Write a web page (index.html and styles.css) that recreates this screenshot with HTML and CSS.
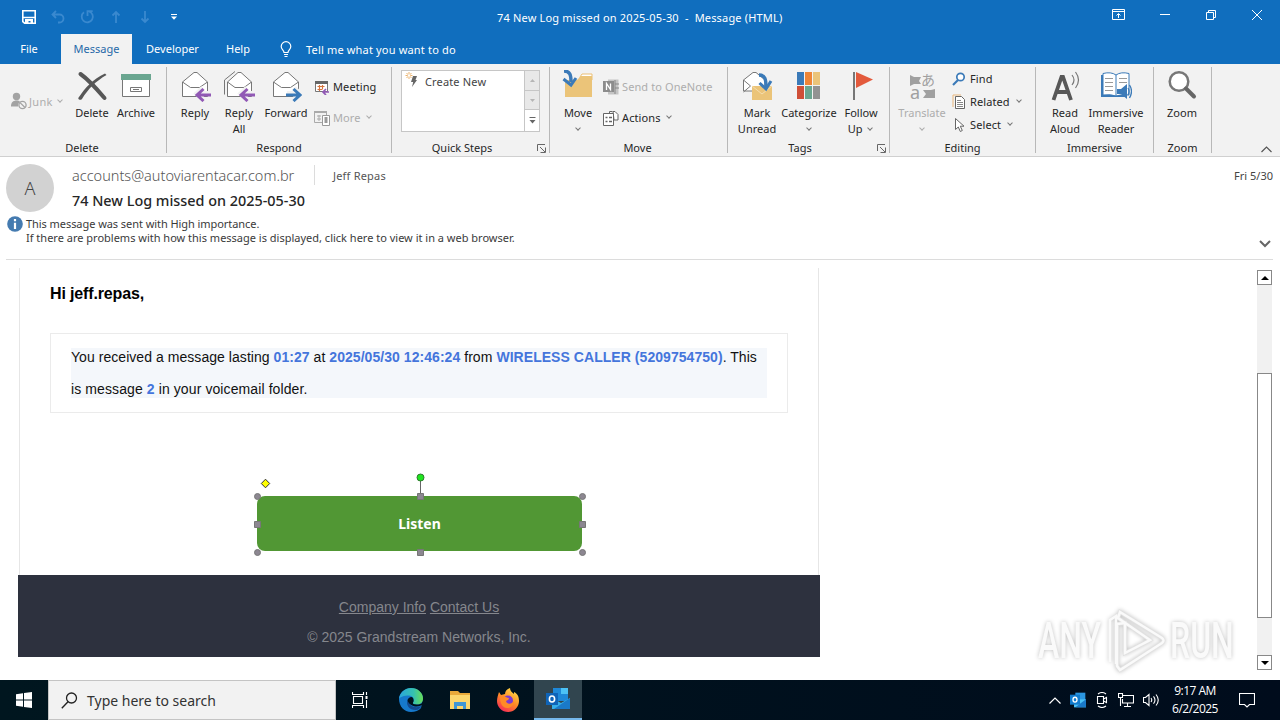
FILE: index.html
```html
<!DOCTYPE html>
<html lang="en">
<head>
  <meta charset="UTF-8">
  <title>74 New Log missed on 2025-05-30 - Message (HTML)</title>
  <link rel="stylesheet" href="styles.css">
</head>
<body>

<!-- Title bar -->
<div class="titlebar">
  <div class="quick-access">
    <svg width="16" height="16" viewBox="0 0 16 16"><path d="M1.800 1.800h12.400v12.400H3.600L1.800 12.600z" fill="none" stroke="#fff" stroke-width="1.600"/><path d="M2 8.500h12" stroke="#fff" stroke-width="1.500"/><path d="M4 10h8v5H9.500v-3h-2v3H4z" fill="#fff"/></svg>
    <svg class="dim" width="16" height="16" viewBox="0 0 16 16"><path d="M6 2L2.500 5.500 6 9M3 5.500h6.500a4 4 0 0 1 0 8H8"/></svg>
    <svg class="dim" width="16" height="16" viewBox="0 0 16 16"><path d="M10 2.400A5.600 5.600 0 1 1 5 3.200M8.500 7V2.200h5.200"/></svg>
    <svg class="dim" width="16" height="16" viewBox="0 0 16 16"><path d="M8 14V3M4.500 6.500L8 3l3.500 3.500"/></svg>
    <svg class="dim" width="16" height="16" viewBox="0 0 16 16"><path d="M8 2v11M4.500 9.500L8 13l3.500-3.500"/></svg>
    <svg width="16" height="16" viewBox="0 0 16 16"><path d="M5 5.500h6" stroke="#fff"/><path d="M5 7.500h6L8 10.800z" fill="#fff"/></svg>
  </div>
  <div class="title">74 New Log missed on 2025-05-30&nbsp; -&nbsp; Message (HTML)</div>
  <div class="window-buttons">
    <svg width="14" height="12" viewBox="0 0 14 12"><path d="M.5.5h12v10H.5zM.5 2.500h12M6.500 9V5M4.500 6.500l2-2 2 2"/></svg>
    <svg width="12" height="12" viewBox="0 0 12 12"><path d="M0 5.500h10"/></svg>
    <svg width="12" height="12" viewBox="0 0 12 12"><path d="M1.500 3.500h7v7h-7zM3.500 3V1.500h7v7H9"/></svg>
    <svg width="12" height="12" viewBox="0 0 12 12"><path d="M1 1l10 10M11 1L1 11"/></svg>
  </div>
</div>

<!-- Tabs -->
<div class="tabs">
  <div class="tab file">File</div>
  <div class="tab active">Message</div>
  <div class="tab developer">Developer</div>
  <div class="tab help">Help</div>
  <svg class="bulb" width="12" height="17" viewBox="0 0 12 17"><path d="M4 11.500c0-2.500-2.800-3-2.800-6a4.800 4.800 0 0 1 9.600 0c0 3-2.800 3.500-2.800 6zM4 13.500h4M4.500 15.500h3" fill="none" stroke="#fff" stroke-width="1.200"/></svg>
  <div class="tell">Tell me what you want to do</div>
</div>

<!-- Ribbon -->
<div class="ribbon">
  <div class="group g-delete">
    <div class="tools">
      <div class="junk disabled">
        <svg width="16" height="18" viewBox="0 0 16 18"><circle cx="5.500" cy="4.500" r="3.700" fill="#a3a3a3"/><path d="M0 14.500c0-4 2-6 5.500-6 1.500 0 3 .5 3.500 1.200a5 5 0 0 0-2 4.800z" fill="#a3a3a3"/><circle cx="11.500" cy="13" r="3.600" fill="#f2f2f2" stroke="#a3a3a3" stroke-width="1.300"/><path d="M9 10.600l5 4.900" stroke="#a3a3a3" stroke-width="1.300"/></svg>
        Junk <i class="caret"></i>
      </div>
      <div class="big w44">
        <svg width="32" height="32" viewBox="0 0 32 32"><path d="M4.500 4C13 10 20 18 28.500 28" fill="none" stroke="#575757" stroke-width="4" stroke-linecap="round"/><path d="M30.500 5C20 11 12 19 6 29c-2 2-5 0-3-2C9 18 17 9 29 3.500z" fill="#575757"/></svg>
        <span>Delete</span>
      </div>
      <div class="big w44">
        <svg width="32" height="32" viewBox="0 0 32 32"><path d="M2.500 9.500h27v17h-27z" fill="#fff" stroke="#777"/><path d="M1 4h30v6H1z" fill="#6aa690"/><path d="M10.500 17.500h11v4h-11zM13 19.500h6" fill="none" stroke="#777"/></svg>
        <span>Archive</span>
      </div>
    </div>
    <div class="group-label"><span>Delete</span></div>
  </div>

  <div class="group g-respond">
    <div class="tools">
      <div class="big w44">
        <svg width="32" height="32" viewBox="0 0 32 32"><path d="M3.500 12L15 2.500h3L28.500 12v14.500h-25z" fill="#fff" stroke="#777"/><path d="M3.500 12l8 5.500h9l8-5.500" fill="none" stroke="#777"/><path d="M31 23.500H19M24 18l-6 5.500 6 5.500" fill="none" stroke="#f2f2f2" stroke-width="5"/><path d="M32 25H18M24.500 19l-6.500 6 6.500 6" fill="none" stroke="#9159b5" stroke-width="3"/></svg>
        <span>Reply</span>
      </div>
      <div class="big w44">
        <svg width="32" height="32" viewBox="0 0 32 32"><path d="M1.500 24.500V10L12 1.500" fill="none" stroke="#777"/><path d="M4.500 12L15 2.500h3L28.500 12v14.500h-24z" fill="#fff" stroke="#777"/><path d="M4.500 12l7.500 5.500h9l7.500-5.500" fill="none" stroke="#777"/><path d="M31 23.500H19M24 18l-6 5.500 6 5.500" fill="none" stroke="#f2f2f2" stroke-width="5"/><path d="M32 25H18M24.500 19l-6.500 6 6.500 6" fill="none" stroke="#9159b5" stroke-width="3"/></svg>
        <span>Reply<br>All</span>
      </div>
      <div class="big w50">
        <svg width="32" height="32" viewBox="0 0 32 32"><path d="M3.500 12L15 2.500h3L28.500 12v14.500h-25z" fill="#fff" stroke="#777"/><path d="M3.500 12l8 5.500h9l8-5.500" fill="none" stroke="#777"/><path d="M17 23.500h12M24 18l6 5.500-6 5.500" fill="none" stroke="#f2f2f2" stroke-width="5"/><path d="M16 25h14M23.500 19l6.500 6-6.500 6" fill="none" stroke="#3b7ab8" stroke-width="3"/></svg>
        <span>Forward</span>
      </div>
      <div class="stack two">
        <div class="small">
          <svg width="16" height="16" viewBox="0 0 16 16"><path d="M1.500 3.500h12v9h-12z" fill="#fff" stroke="#777"/><path d="M1 2h13v3H1z" fill="#666"/><path d="M3.500 7.500h7M3.500 10.500h5M5.500 6v6M8.500 6v4" stroke="#d5743f" stroke-width="1.200"/><path d="M15 13H9M12 10l-3 3 3 3" fill="none" stroke="#9159b5" stroke-width="1.700"/></svg>
          Meeting
        </div>
        <div class="small disabled">
          <svg width="16" height="16" viewBox="0 0 16 16"><path d="M.500 2.500h12v10H.5zM3 6h4M3 9h4M5 5v6" fill="none" stroke="#aaa"/><path d="M0 1h13v2H0z" fill="#aaa"/><path d="M8.500 5.500h7v10h-7z" fill="#fff" stroke="#999"/><path d="M10.500 7h3v6h-3z" fill="#999"/></svg>
          More <i class="caret"></i>
        </div>
      </div>
    </div>
    <div class="group-label"><span>Respond</span></div>
  </div>

  <div class="group g-quick">
    <div class="tools">
      <div class="gallery">
        <div class="gallery-item">
          <svg width="16" height="16" viewBox="0 0 16 16"><path d="M4 0v7M.5 3.500h7M1.500 1l5 5M6.500 1l-5 5" stroke="#e9a95c" stroke-width=".9"/><circle cx="4" cy="3.500" r="1.300" fill="#fff"/><path d="M8 4h4l-1.500 4H12l-5 7 1.200-5H6z" fill="#666"/></svg>
          Create New
        </div>
        <div class="spin">
          <div class="off"><svg width="5" height="3"><path d="M0 3l2.500-3L5 3z" fill="#b5b5b5"/></svg></div>
          <div class="off"><svg width="5" height="3"><path d="M0 0l2.500 3L5 0z" fill="#b5b5b5"/></svg></div>
          <div><svg width="7" height="7"><path d="M.5 0h6v1h-6zM.5 3h6L3.500 6.500z" fill="#666"/></svg></div>
        </div>
      </div>
    </div>
    <div class="group-label"><span>Quick Steps</span><svg class="launcher" width="9" height="9"><path d="M.5 7V.5H8M3 3l5 5M8.500 3.500v5h-5" fill="none" stroke="#666"/></svg></div>
  </div>

  <div class="group g-move">
    <div class="tools">
      <div class="big w46">
        <svg width="32" height="32" viewBox="0 0 32 32"><path d="M18 7l2-3h10v6H18z" fill="#fff" stroke="#ebbf74"/><path d="M3 10h12l4-4h11v21H3z" fill="#ebc479"/><path d="M2 1c6 0 7 4 7 11" fill="none" stroke="#3b7ab8" stroke-width="3.400"/><path d="M1.500 9L9 15l5-7" fill="none" stroke="#3b7ab8" stroke-width="3"/></svg>
        <span>Move</span><i class="caret"></i>
      </div>
      <div class="stack two">
        <div class="small disabled">
          <svg width="16" height="16" viewBox="0 0 16 16"><path d="M5 .5h10.500v15H5z" fill="#c4c4c4"/><path d="M12 1v14M12 5h4M12 9h4" stroke="#888"/><path d="M0 2h11v11H0z" fill="#8c8c8c"/><path d="M3.500 11V4.500l4 6v-6" fill="none" stroke="#fff" stroke-width="1.300"/></svg>
          Send to OneNote
        </div>
        <div class="small">
          <svg width="16" height="16" viewBox="0 0 16 16"><path d="M6.500 3V1.500h3M10 1.500h2l3 3V10h-4z" fill="#fff" stroke="#666"/><path d="M.5 3.500h10v12H.5z" fill="#fff" stroke="#666"/><path d="M2.500 7.500h2M2.500 11.500h2M6 7.500h3M6 11.500h3" stroke="#666" stroke-width="1.500"/></svg>
          Actions <i class="caret"></i>
        </div>
      </div>
    </div>
    <div class="group-label"><span>Move</span></div>
  </div>

  <div class="group g-tags">
    <div class="tools">
      <div class="big w46">
        <svg width="32" height="32" viewBox="0 0 32 32"><path d="M2.500 10L12 2.500h3L24 10v11H2.500z" fill="#fff" stroke="#777"/><path d="M2.500 10l7 6-7 6" fill="none" stroke="#777"/><path d="M11 16h20v14H11z" fill="#ebc479"/><path d="M11 16l10 8 10-8" fill="none" stroke="#f6deaf"/><path d="M18 5c6 0 7 4 7 12" fill="none" stroke="#3b7ab8" stroke-width="3.400"/><path d="M18.500 13l6.500 6 5-8" fill="none" stroke="#3b7ab8" stroke-width="3"/></svg>
        <span>Mark<br>Unread</span>
      </div>
      <div class="big w58">
        <svg width="32" height="32" viewBox="0 0 32 32"><path d="M4 2h7v13H4z" fill="#3b7ab8"/><path d="M12 2h7v13h-7z" fill="#ee8537"/><path d="M20 2h7v13h-7z" fill="#ebc479"/><path d="M4 16h7v13H4z" fill="#cf4f37"/><path d="M12 16h7v13h-7z" fill="#6aa690"/><path d="M20 16h7v13h-7z" fill="#929292"/></svg>
        <span>Categorize</span><i class="caret"></i>
      </div>
      <div class="big w46">
        <svg width="32" height="32" viewBox="0 0 32 32"><path d="M9 2v28" stroke="#777" stroke-width="2"/><path d="M11 2l17 7.500L11 18z" fill="#e35a3c"/></svg>
        <span>Follow<br>Up <i class="caret"></i></span>
      </div>
    </div>
    <div class="group-label"><span>Tags</span><svg class="launcher" width="9" height="9"><path d="M.5 7V.5H8M3 3l5 5M8.500 3.500v5h-5" fill="none" stroke="#666"/></svg></div>
  </div>

  <div class="group g-editing">
    <div class="tools">
      <div class="big w58 disabled">
        <svg class="translate" width="32" height="32" viewBox="0 0 32 32"><path d="M4 5l4 2h7l-2 4 2 3H8l-4 2z" fill="#a0a0a0"/><path d="M29 19l-4 1h-8l3 4-3 4h12z" fill="#a0a0a0"/><text x="15" y="15" class="kana">あ</text><text x="4" y="29" class="latin">a</text></svg>
        <span>Translate</span><i class="caret"></i>
      </div>
      <div class="stack three">
        <div class="small">
          <svg width="14" height="14" viewBox="0 0 14 14"><circle cx="8.500" cy="5" r="3.700" fill="#fff" stroke="#3b7ab8" stroke-width="1.700"/><path d="M6 8l-5 5" stroke="#3b7ab8" stroke-width="2.200"/></svg>
          Find
        </div>
        <div class="small">
          <svg width="14" height="16" viewBox="0 0 14 16"><path d="M1 13V1h8" fill="none" stroke="#e9b77c"/><path d="M3.500 2.500h6l3 3v9h-9z" fill="#fff" stroke="#666"/><path d="M5 6.500h4M5 8.500h6M5 10.500h6M5 12.500h6" stroke="#888"/></svg>
          Related <i class="caret"></i>
        </div>
        <div class="small">
          <svg width="14" height="16" viewBox="0 0 14 16"><path d="M3.500 1.500v11l2.800-2.500 2 4.500 2-1-2-4.300H12z" fill="#fff" stroke="#666"/></svg>
          Select <i class="caret"></i>
        </div>
      </div>
    </div>
    <div class="group-label"><span>Editing</span></div>
  </div>

  <div class="group g-immersive">
    <div class="tools">
      <div class="big w48">
        <svg width="32" height="32" viewBox="0 0 32 32"><path d="M4.500 30L12.500 7h1.500l8 23M8 22h10.500" fill="none" stroke="#575757" stroke-width="3.800"/><path d="M23 5q4 5 0 10M26.500 2q6 8 0 16" fill="none" stroke="#777" stroke-width="1.200"/></svg>
        <span>Read<br>Aloud</span>
      </div>
      <div class="big w54">
        <svg width="32" height="32" viewBox="0 0 32 32"><path d="M1 5v22h24V5" fill="#3b7ab8"/><path d="M3 3.500q8-2 13 1.500 5-3.500 13-1.500V25q-8-1-13 1-5-2-13-1z" fill="#fff" stroke="#3b7ab8"/><path d="M16 5v21" stroke="#3b7ab8"/><path d="M5 8.500h8M5 12.500h8M5 16.500h8M5 20.500h8M19 8.500h8M19 12.500h8" stroke="#999"/><path d="M17 19h4l6-5v15l-6-5h-4z" fill="#3b7ab8"/><path d="M28 18q2 3 0 7M29.500 15q4 6 0 13" fill="none" stroke="#3b7ab8" stroke-width="1.300"/></svg>
        <span>Immersive<br>Reader</span>
      </div>
    </div>
    <div class="group-label"><span>Immersive</span></div>
  </div>

  <div class="group g-zoom">
    <div class="tools">
      <div class="big w54">
        <svg width="32" height="32" viewBox="0 0 32 32"><circle cx="13" cy="11.500" r="9.300" fill="#fff" stroke="#777" stroke-width="2.500"/><path d="M20 18.500l8 8" stroke="#666" stroke-width="4" stroke-linecap="round"/></svg>
        <span>Zoom</span>
      </div>
    </div>
    <div class="group-label"><span>Zoom</span></div>
  </div>

  <svg class="collapse" width="11" height="7"><path d="M.5 6l5-5 5 5" fill="none" stroke="#555" stroke-width="1.200"/></svg>
</div>

<!-- Message header -->
<div class="header">
  <div class="sender-row">
    <div class="avatar">A</div>
    <div class="who">
      <div class="from"><span class="email">accounts@autoviarentacar.com.br</span><span class="to">Jeff Repas</span></div>
      <div class="subject">74 New Log missed on 2025-05-30</div>
    </div>
    <div class="date">Fri 5/30</div>
  </div>
  <div class="infobar">
    <svg width="16" height="16" viewBox="0 0 16 16"><circle cx="8" cy="8" r="7.800" fill="#457bb0"/><path d="M8 3v2.200M8 6.700V13" stroke="#fff" stroke-width="2.200"/></svg>
    <div class="info-text">
      <div class="line1">This message was sent with High importance.</div>
      <div class="line2">If there are problems with how this message is displayed, click here to view it in a web browser.</div>
    </div>
    <svg class="expand" width="12" height="8"><path d="M1 1l5 5 5-5" fill="none" stroke="#666" stroke-width="2"/></svg>
  </div>
</div>

<!-- Mail body -->
<div class="reading">
  <div class="mail">
    <div class="card">
      <div class="hi">Hi jeff.repas,</div>
      <div class="notice">
        <div class="notice-text">
          <div class="n1">You received a message lasting <b>01:27</b> at <b>2025/05/30 12:46:24</b> from <b>WIRELESS CALLER (5209754750)</b>. This</div>
          <div class="n2">is message <b>2</b> in your voicemail folder.</div>
        </div>
      </div>
      <div class="listen">
        Listen
        <svg class="handles" width="345" height="92" viewBox="0 0 345 92">
          <path d="M173.500 12v18" stroke="#666"/>
          <g fill="#8c8791" stroke="#777"><circle cx="10.500" cy="30.500" r="3"/><circle cx="335.500" cy="30.500" r="3"/><circle cx="10.500" cy="86.500" r="3"/><circle cx="335.500" cy="86.500" r="3"/><path d="M170.500 27.500h6v6h-6zM170.500 83.500h6v6h-6zM7.500 55.500h6v6h-6zM332.500 55.500h6v6h-6z"/></g>
          <circle cx="173.500" cy="11.500" r="3.500" fill="#1fe51f" stroke="#2d7a2d"/>
          <path d="M18.500 13.200l4.200 4.300-4.200 4.300-4.200-4.300z" fill="#ff0" stroke="#333"/>
        </svg>
      </div>
    </div>
    <div class="footer">
      <div class="f1"><u>Company Info</u> <u>Contact Us</u></div>
      <div class="f2">© 2025 Grandstream Networks, Inc.</div>
    </div>
  </div>
  <div class="scrollbar">
    <div class="arrow"><svg width="8" height="4"><path d="M0 4l4-4 4 4z"/></svg></div>
    <div class="thumb"></div>
    <div class="arrow down"><svg width="8" height="4"><path d="M0 0l4 4 4-4z"/></svg></div>
  </div>
  <div class="watermark">
    <span>ANY</span>
    <svg width="60" height="66" viewBox="0 0 60 66"><path d="M14 4l42 26q3 2.500 0 5L14 62l-3-4V16l8-1v30l25-13L12 10z" fill="none" stroke="#e2e2e2" stroke-width="4"/><path d="M4 54V12l6-4v48M14 4l42 26q3 2.500 0 5L14 62l-3-4V16l8-1v30l25-13L12 10z" fill="none" stroke="#fafafa" stroke-width="2.500"/></svg>
    <span>RUN</span>
  </div>
</div>

<!-- Taskbar -->
<div class="taskbar">
  <div class="start"><svg width="16" height="16" viewBox="0 0 16 16"><path d="M0 2.300l7-1v6.200H0zM8 1.100L16 0v7.500H8zM0 8.500h7v6.200l-7-1zM8 8.500h8V16l-8-1.100z" fill="#fff"/></svg></div>
  <div class="search">
    <svg width="17" height="17" viewBox="0 0 17 17"><circle cx="10.500" cy="6" r="5" fill="none" stroke="#222" stroke-width="1.300"/><path d="M7 9.800L.8 16.200" stroke="#222" stroke-width="1.400"/></svg>
    <span>Type here to search</span>
  </div>
  <div class="app view"><svg width="16" height="16" viewBox="0 0 16 16"><path d="M1.500 4.500h9v7h-9zM.5 0v2.500h11V0M.5 16v-2.500h11V16M14.500 0v3M14.500 8v8" fill="none" stroke="#fff" stroke-width="1.100"/><path d="M13.500 4h2v3h-2z" fill="#fff"/></svg></div>
  <div class="app edge"><svg width="24" height="24" viewBox="0 0 24 24">
    <defs>
      <linearGradient id="edgeTop" x1="0" x2="1"><stop offset="0" stop-color="#2aa6dd"/><stop offset=".6" stop-color="#35c1b0"/><stop offset="1" stop-color="#6ade56"/></linearGradient>
      <linearGradient id="fox" x1=".8" y1="0" x2=".2" y2="1"><stop offset="0" stop-color="#ffe14a"/><stop offset=".5" stop-color="#ff8a26"/><stop offset="1" stop-color="#f5245a"/></linearGradient>
    </defs>
    <path d="M0 11C0 5 6 0 12 0s12 5 12 10l-2 10c-2 2.500-6 4-10 4C5 24 0 18 0 11z" fill="#1679cc"/>
    <path d="M0 11C1 4 6 0 12 0c7 0 12 5 12 10.500 0 4-3 6-6.500 6-3 0-4-1-3.500-2 2-3 0-7-4-7C5 7.500 1 9 0 11z" fill="url(#edgeTop)"/>
    <path d="M8.500 12c-2 5 2 10 8 10 3 0 5-2 6-4-5 2.500-12 1-14-6z" fill="#124a91"/>
    <path d="M14 14.500c1-1 1-4-1-5.500-3 0-4.500 2-4.500 3.500 1 3.500 5 6 9 6 3 0 5-1 6.500-2.500V14c-1 2-4 2.500-6.500 2.500-3 0-4-1-3.500-2z" fill="#00121c"/></svg></div>
  <div class="app explorer"><svg width="22" height="20" viewBox="0 0 22 20"><path d="M1 1h8l2 2h10v16H1z" fill="#e9a93a"/><path d="M1 5h20v14H1z" fill="#fcd66d"/><path d="M5 19v-7h12v7h-3v-3H8v3z" fill="#3f96d5"/></svg></div>
  <div class="app firefox"><svg width="24" height="24" viewBox="0 0 24 24"><path d="M3 4l2 3 4-1c0-3 2-5 5-6 0 3 2 4 4 6l0-2c4 2 5 5 5 9a11 11 0 0 1-22 0c0-3 1-6 2-9z" fill="url(#fox)"/><circle cx="12" cy="12.500" r="5" fill="#7c3ad1"/><path d="M4 9c4-2 6 1 9 1 0 2-2 2-3 3 1 4 6 3 8 0 0 4-3 7-7 7s-7-4-7-11z" fill="#ff8a26"/></svg></div>
  <div class="app current"><svg width="24" height="22" viewBox="0 0 24 22"><path d="M7 0h15v13H7z" fill="#1e88d8"/><path d="M15 0h7v6h-7z" fill="#4cc2f5"/><path d="M6 10l9 5 9-5v11H6z" fill="#35aee9"/><path d="M24 10L8 21h16z" fill="#1a79c8"/><path d="M0 5h12v12H0z" fill="#0f64b8"/><ellipse cx="6" cy="11" rx="2.600" ry="3" fill="none" stroke="#fff" stroke-width="1.600"/></svg></div>
  <div class="tray">
    <svg width="12" height="7"><path d="M.5 6.500l5.500-5.500 5.500 5.500" fill="none" stroke="#fff" stroke-width="1.200"/></svg>
    <svg width="16" height="16" viewBox="0 0 24 22"><path d="M8 0h15v12H8z" fill="#2b96e0"/><path d="M6 10h18v12H6z" fill="#4cc2f5"/><path d="M24 10L8 22h16z" fill="#1a79c8"/><path d="M0 3h15v15H0z" fill="#117bcd"/><ellipse cx="7.500" cy="10.500" rx="3" ry="3.600" fill="none" stroke="#fff" stroke-width="2"/></svg>
    <svg width="14" height="16" viewBox="0 0 14 16"><path d="M2.500 4.500h6v7h-6zM8.500 7l3-1.500v5l-3-1.500M3 2q4-3 8 0M3 14q4 3 8 0" fill="none" stroke="#fff" stroke-width="1.100"/></svg>
    <svg width="16" height="14" viewBox="0 0 16 14"><path d="M5 2.500h10.500v7.500H4.500V6M9.500 10v3M6 13.500h7M.5.5h4v4h-4zM2.500 4.500V13" fill="none" stroke="#fff" stroke-width="1.100"/></svg>
    <svg width="17" height="14" viewBox="0 0 17 14"><path d="M.5 4.500h2l3.500-3v11l-3.500-3h-2zM8 5q1.500 2 0 4M10.500 3.300q3 3.700 0 7.400M13 1.500q4.500 5.500 0 11" fill="none" stroke="#fff" stroke-width="1.100"/></svg>
    <div class="clock">9:17 AM<br>6/2/2025</div>
    <svg class="bell" width="16" height="16" viewBox="0 0 16 16"><path d="M.5 1.500h15v11h-5L8 15l-2.500-2.500h-5z" fill="none" stroke="#fff" stroke-width="1.100"/></svg>
  </div>
</div>

</body>
</html>
```

FILE: styles.css
```css
* {
  box-sizing: border-box;
}

body {
  margin: 0;
  width: 1280px;
  height: 720px;
  overflow: hidden;
  display: flex;
  flex-direction: column;
  font-family: "Noto Sans", "Open Sans", sans-serif;
  font-size: 11px;
  color: #262626;
  background: #fff;
}

svg {
  display: block;
  flex: none;
}

/* Title bar */
.titlebar {
  display: grid;
  grid-template-columns: 497px 1fr 168px;
  align-items: center;
  height: 34px;
  background: #106ebe;
  color: #fff;
}

.quick-access {
  display: flex;
  gap: 13px;
  padding-left: 21px;
}

.quick-access .dim path {
  fill: none;
  stroke: #3a89cf;
  stroke-width: 1.8;
}

.title {
  white-space: nowrap;
  letter-spacing: 0.17px;
}

.window-buttons {
  display: flex;
  justify-content: space-between;
  padding: 0 17px 4px 0;
}

.window-buttons path {
  fill: none;
  stroke: #fff;
}

/* Tabs */
.tabs {
  display: flex;
  align-items: center;
  height: 30px;
  background: #106ebe;
  color: #fff;
}

.tab {
  height: 30px;
  line-height: 30px;
  text-align: center;
}

.tab.file {
  width: 58px;
}

.tab.active {
  margin-left: 3px;
  width: 71px;
  background: #f2f2f2;
  color: #2668a8;
}

.tab.developer {
  width: 81px;
}

.tab.help {
  width: 50px;
}

.bulb {
  margin-left: 17px;
}

.tell {
  margin-left: 14px;
  letter-spacing: 0.17px;
}

/* Ribbon */
.ribbon {
  display: flex;
  height: 93px;
  background: #f2f2f2;
  border-bottom: 1px solid #d0d0d0;
}

.group {
  display: flex;
  flex-direction: column;
  justify-content: space-between;
  height: 86px;
  margin-top: 3px;
  padding-top: 3px;
  border-right: 1px solid #b8b8b8;
}

.g-delete { width: 167px; }
.g-respond { width: 225px; }
.g-quick { width: 158px; }
.g-move { width: 178px; }
.g-tags { width: 162px; }
.g-editing { width: 146px; }
.g-immersive { width: 118px; }
.g-zoom { width: 58px; }

.tools {
  display: flex;
  height: 66px;
  padding-left: 6px;
}

.g-delete .tools { padding-left: 8px; }
.g-quick .tools { padding-left: 9px; }
.g-move .tools { padding-left: 5px; }
.g-editing .tools { padding-left: 3px; }
.g-immersive .tools { padding-left: 5px; }
.g-zoom .tools { padding-left: 1px; }

.big {
  display: flex;
  flex-direction: column;
  align-items: center;
  text-align: center;
  line-height: 16px;
  white-space: nowrap;
}

.big > span {
  margin-top: 3px;
}

.w44 { width: 44px; }
.w46 { width: 46px; }
.w48 { width: 48px; }
.w50 { width: 50px; }
.w54 { width: 54px; }
.w58 { width: 58px; }

.big > .caret {
  margin: 5px 0 0;
}

.caret {
  display: inline-block;
  width: 4px;
  height: 4px;
  margin: 0 2px 3px 3px;
  border: solid #777;
  border-width: 0 1px 1px 0;
  transform: rotate(45deg);
}

.disabled {
  color: #adadad;
}

.disabled .caret {
  border-color: #adadad;
}

.junk {
  display: flex;
  align-items: center;
  width: 62px;
  gap: 2px;
  padding: 0 0 4px 3px;
  letter-spacing: 0.3px;
}

.stack {
  display: flex;
  flex-direction: column;
  margin-left: 3px;
}

.small {
  display: flex;
  align-items: center;
  gap: 3px;
  white-space: nowrap;
  letter-spacing: 0.1px;
}

.two .small {
  height: 31px;
}

.three .small {
  height: 23px;
  gap: 4px;
}

.three {
  margin: -3px 0 0 1px;
}

.two {
  padding-top: 1px;
}

.g-move .two {
  margin-left: 2px;
}

.translate {
  overflow: visible;
}

.kana {
  font: 14px "Noto Sans CJK JP", sans-serif;
  fill: #a0a0a0;
}

.latin {
  font: 18px "Noto Sans", sans-serif;
  fill: #a0a0a0;
}

.group-label {
  display: flex;
  align-items: center;
  height: 16px;
  line-height: 16px;
  margin-bottom: -3px;
}

.group-label span {
  flex: 1;
  text-align: center;
}

.g-delete .group-label,
.g-move .group-label {
  margin-right: 2px;
}

.launcher {
  margin: 0 3px 0 5px;
}

.gallery {
  display: flex;
  width: 139px;
  height: 62px;
  background: #fff;
  border: 1px solid #c6c6c6;
}

.gallery-item {
  display: flex;
  flex: 1;
  gap: 4px;
  padding: 1px 0 0 3px;
  height: 24px;
  line-height: 20px;
  color: #444;
  letter-spacing: 0.15px;
}

.spin {
  display: grid;
  grid-template-rows: 20px 19px 21px;
  width: 15px;
  border-left: 1px solid #c6c6c6;
}

.spin div {
  display: grid;
  place-items: center;
}

.spin .off {
  background: #e8e8e8;
  border-bottom: 1px solid #c6c6c6;
}

.collapse {
  align-self: flex-end;
  margin: 0 0 3px 49px;
}

/* Message header */
.header {
  height: 103px;
  margin: 0 7px 0 6px;
  padding-top: 7px;
  border-bottom: 1px solid #dcdcdc;
}

.sender-row {
  display: flex;
  height: 50px;
}

.avatar {
  width: 48px;
  height: 48px;
  border-radius: 50%;
  background: #d2d2d2;
  color: #444;
  font-size: 18px;
  font-weight: 300;
  line-height: 48px;
  text-align: center;
}

.who {
  flex: 1;
  margin-left: 18px;
}

.from {
  display: flex;
  align-items: center;
  height: 21px;
  color: #555;
}

.email {
  width: 243px;
  font-size: 14.5px;
  font-weight: 300;
  border-right: 1px solid #dcdcdc;
}

.to {
  margin: 2px 0 0 18px;
  letter-spacing: 0.2px;
}

.subject {
  margin-top: 5px;
  font-size: 14.4px;
  font-weight: 500;
  line-height: 21px;
}

.date {
  margin-top: 4px;
  color: #444;
}

.infobar {
  display: flex;
  padding: 2px 2px 0 1px;
  line-height: 14px;
  color: #3a3a3a;
}

.info-text {
  flex: 1;
  margin-left: 3px;
  margin-top: 1px;
}

.line1 {
  letter-spacing: -0.06px;
}

.expand {
  margin-top: 24px;
}

/* Mail body */
.reading {
  position: relative;
  display: flex;
  justify-content: space-between;
  height: 420px;
  padding: 8px 8px 0 18px;
}

.mail {
  width: 802px;
  font-family: "Liberation Sans", sans-serif;
}

.card {
  height: 307px;
  margin: 0 1px;
  padding: 16px 30px 0;
  border: solid #e6e6e6;
  border-width: 0 1px;
}

.hi {
  height: 49px;
  font-size: 16px;
  font-weight: bold;
  line-height: 20px;
  color: #000;
  letter-spacing: -0.15px;
}

.notice {
  height: 80px;
  padding: 14px 20px;
  border: 1px solid #ebebeb;
}

.notice-text {
  height: 50px;
  background: #f4f7fb;
  font-size: 14px;
  color: #111;
  white-space: nowrap;
}

.n1 {
  height: 26px;
  line-height: 18px;
  letter-spacing: 0.05px;
}

.n2 {
  height: 24px;
  line-height: 30px;
  letter-spacing: 0.1px;
}

.notice b {
  color: #4475dc;
}

.listen {
  position: relative;
  width: 325px;
  height: 55px;
  margin: 83px 0 0 207px;
  border-radius: 8px;
  background: #519734;
  color: #fff;
  font: bold 14px/55px "Noto Sans", sans-serif;
  text-align: center;
}

/* selection handles drawn over the button */
.handles {
  position: absolute;
  left: -10px;
  top: -30px;
}

.footer {
  height: 82px;
  padding-top: 17px;
  background: #2d313e;
  color: #85878d;
  font-size: 14px;
  line-height: 30px;
  text-align: center;
}

.scrollbar {
  display: flex;
  flex-direction: column;
  width: 15px;
  height: 400px;
  margin-top: 2px;
  background: #f1f1f1;
}

.arrow {
  display: grid;
  place-items: center;
  width: 15px;
  height: 15px;
  border: 1px solid #888;
  background: #fff;
}

.arrow.down {
  margin-top: auto;
}

.thumb {
  height: 245px;
  margin-top: 88px;
  border: 1px solid #888;
  background: #fff;
}

.watermark {
  position: absolute;
  left: 1038px;
  top: 348px;
  display: flex;
  align-items: center;
  width: 196px;
  justify-content: space-between;
  color: #fafafa;
  font: 500 50px/66px Roboto, sans-serif;
  filter: drop-shadow(0 0 2px #c0c0c0);
}

.watermark span {
  width: 64px;
  transform: scaleX(0.64);
  transform-origin: 0 0;
}

/* Taskbar */
.taskbar {
  display: flex;
  height: 40px;
  background: linear-gradient(90deg, #00161f, #000c1c);
  color: #fff;
}

.start {
  display: grid;
  place-items: center;
  width: 48px;
}

.search {
  display: flex;
  align-items: center;
  width: 288px;
  gap: 9px;
  padding-left: 12px;
  border: 1px solid #c4c4c4;
  background: #f2f2f2;
  color: #333;
  font-size: 14px;
}

.app {
  display: grid;
  place-items: center;
  width: 48px;
}

.app.edge {
  width: 54px;
}

.app.explorer {
  width: 44px;
}

.app.firefox {
  width: 54px;
  padding-right: 2px;
}

.app.current {
  margin-left: -2px;
  background: #31454f;
  border-bottom: 2px solid #76b9ed;
}

.tray {
  display: flex;
  align-items: center;
  gap: 9px;
  margin-left: auto;
  padding-right: 25px;
}

.clock {
  width: 52px;
  font-family: "Open Sans", sans-serif;
  font-size: 12px;
  line-height: 18px;
  text-align: center;
  letter-spacing: -0.5px;
}

.bell {
  margin-left: 9px;
}
```
